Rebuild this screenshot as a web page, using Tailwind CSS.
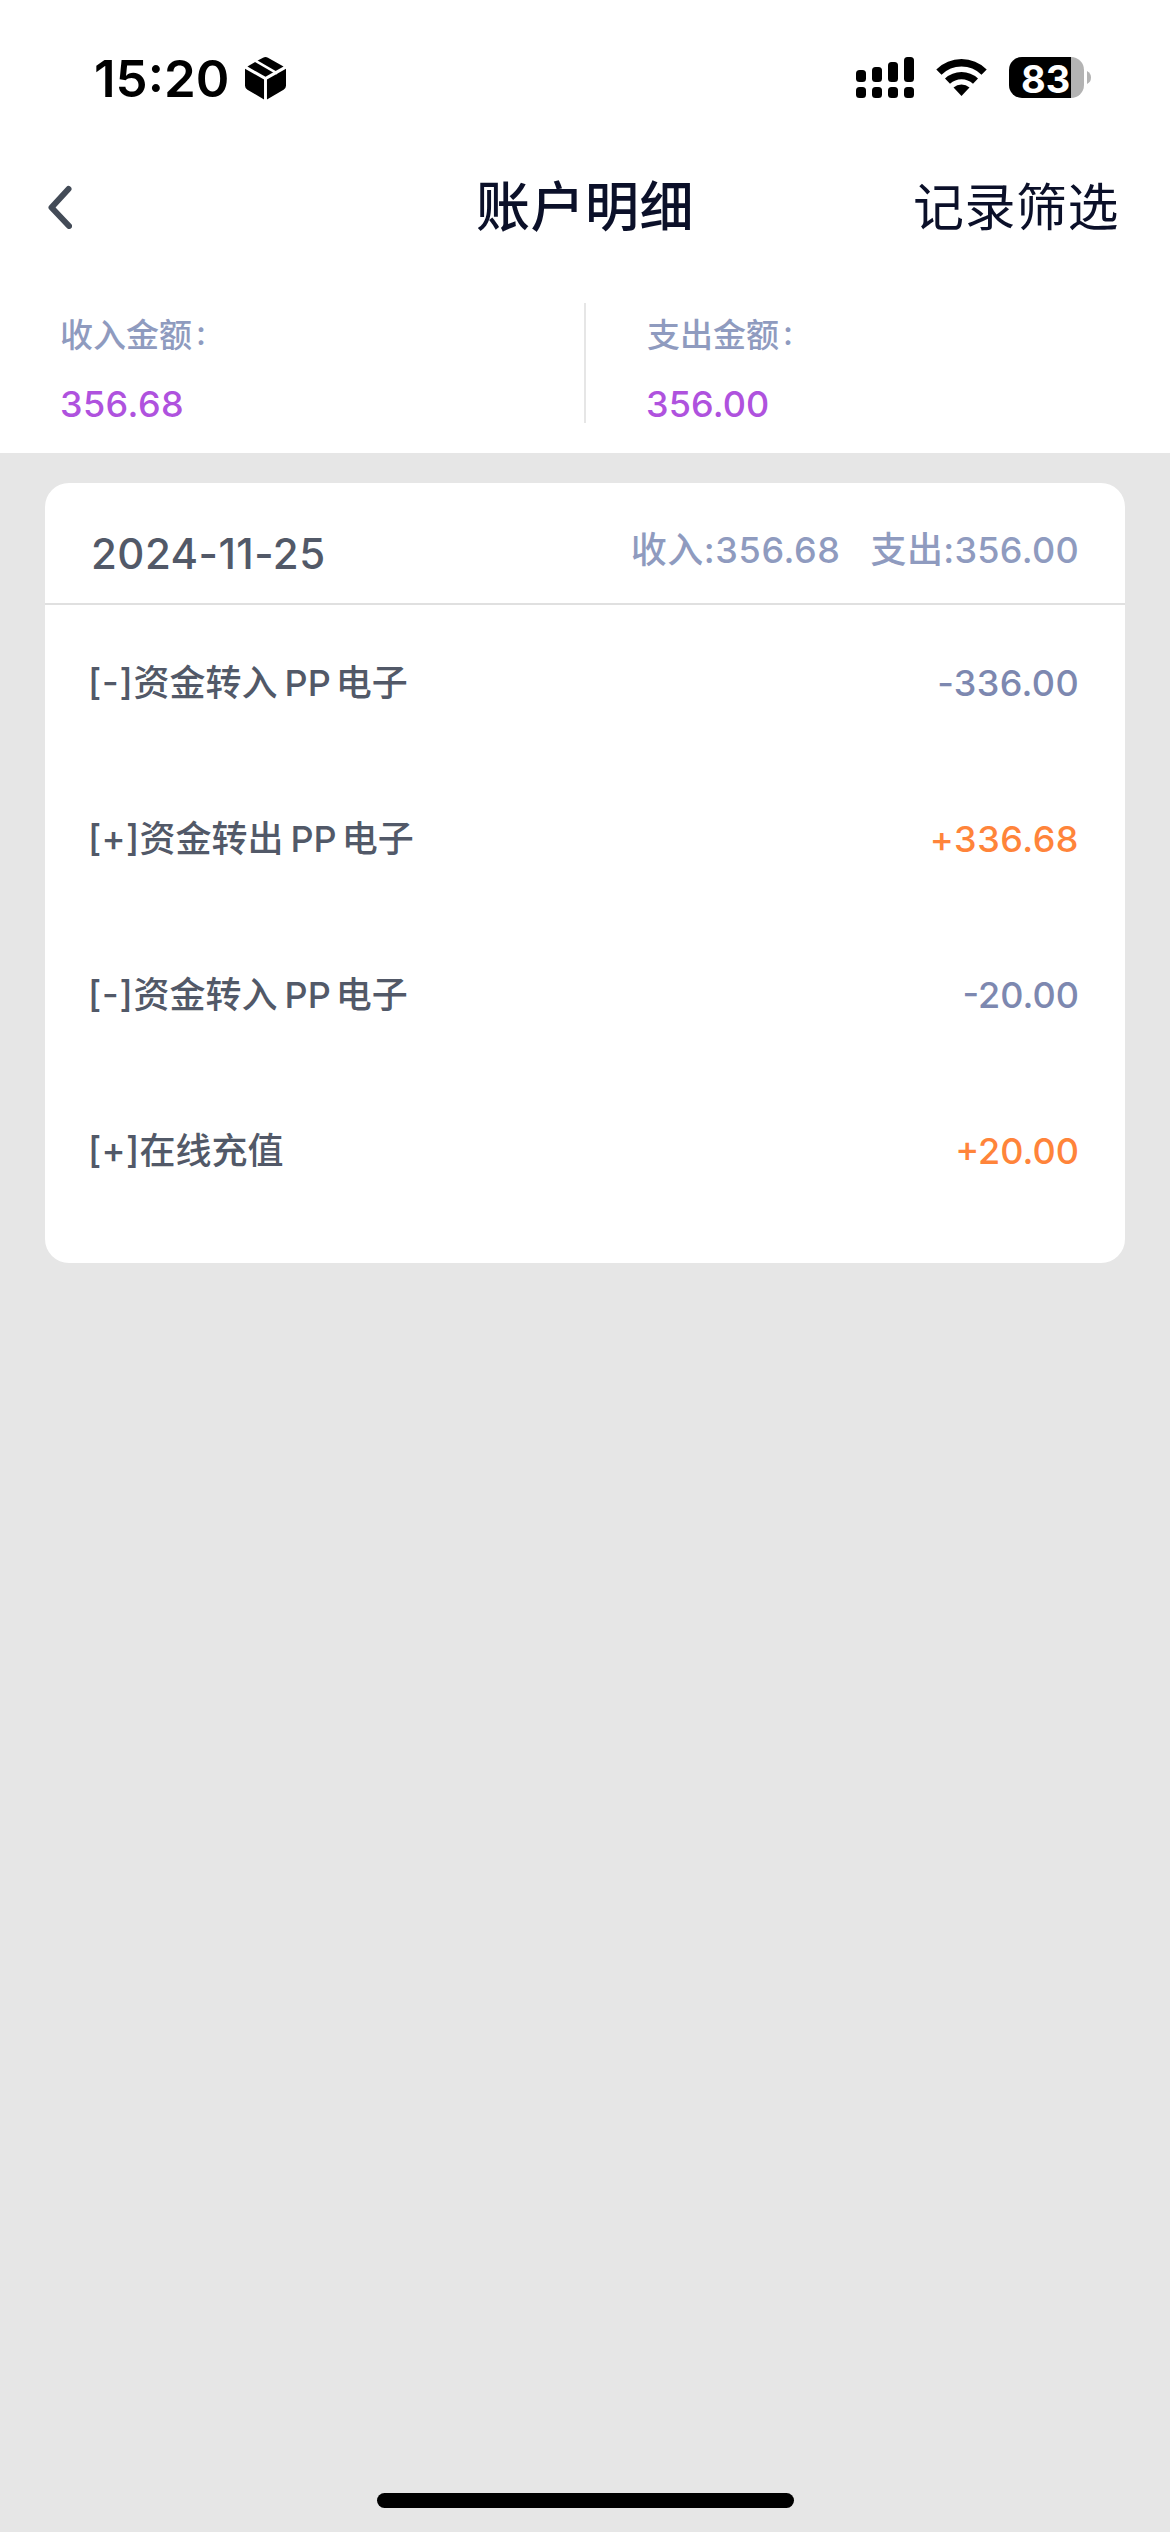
<!DOCTYPE html>
<html lang="zh-CN">
<head>
<meta charset="utf-8">
<title>账户明细</title>
<script src="https://cdn.jsdelivr.net/npm/@tailwindcss/browser@4"></script>
</head>
<body class="w-[1170px] h-[2532px] overflow-hidden bg-[#e6e6e6] font-['Inter','Noto_Sans_CJK_SC',sans-serif] whitespace-nowrap flex flex-col">
<header class="h-[453px] bg-white shrink-0">
  <div class="h-[141px] pt-[48px] pl-[94px] pr-[79px] flex justify-between items-start">
    <div class="flex items-center h-[60px] gap-[16px]">
      <span class="text-[51px] leading-[60px] pt-[2px] font-semibold text-black">15:20</span>
      <svg class="w-[41px] h-[44px]" viewBox="0 0 42 44"><path d="M15 3 18.500 1.200Q21 0 23.500 1.200L39.500 10.300 21 20.800 2.500 10.300Z"/><path d="M0 12.500 19.500 23.500V44L2.500 34Q0 32.500 0 30Z M42 12.500 22.500 23.500V44L39.500 34Q42 32.500 42 30Z"/><path d="M10 4 33 17.300" stroke="#fff" stroke-width="2.500"/></svg>
    </div>
    <div class="flex items-start pt-[9px]">
      <svg class="w-[58px] h-[42px] mr-[22px]" viewBox="0 0 58 42"><rect x="0" y="13" width="10" height="12" rx="3.500"/><rect x="16" y="10" width="10" height="15" rx="3.500"/><rect x="32" y="5" width="10" height="20" rx="3.500"/><rect x="48" y="0" width="10" height="25" rx="3.500"/><rect x="0" y="30" width="10" height="11" rx="3.500"/><rect x="16" y="30" width="10" height="11" rx="3.500"/><rect x="32" y="30" width="10" height="11" rx="3.500"/><rect x="48" y="30" width="10" height="11" rx="3.500"/></svg>
      <svg class="w-[51px] h-[42px] mr-[22px]" viewBox="0 0 51 42"><path d="M0.300 12.500Q11 2 25.500 2T50.700 12.500L45.500 17.700Q37 9.500 25.500 9.500T5.500 17.700Z"/><path d="M9 21.500Q16 15 25.500 15T42 21.500L37 26.800Q32 22.300 25.500 22.300T14 26.800Z"/><path d="M17.500 30.500Q21 27.500 25.500 27.500T33.500 30.500L25.500 39Z"/></svg>
      <div class="flex items-center">
        <div class="w-[75px] h-[41px] rounded-[13px] bg-[linear-gradient(to_right,#000_62px,#b3b3b3_62px)] pl-[12px] flex items-center"><span class="text-[38px] leading-[46px] pt-[2px] font-bold text-white">83</span></div>
        <svg class="w-[4px] h-[13px] ml-[3px]" viewBox="0 0 4 13"><path d="M0 0Q4 2 4 6.500T0 13Z" fill="#b3b3b3"/></svg>
      </div>
    </div>
  </div>
  <div class="h-[132px] pl-[48px] pr-[51px] grid grid-cols-[1fr_auto_1fr] items-center text-[#0b1029]">
    <svg class="w-[24px] h-[44px]" viewBox="0 0 24 44" fill="none" stroke="#434b57" stroke-width="6" stroke-linecap="round" stroke-linejoin="round"><path d="M20.500 4 3.500 22.500 21 41"/></svg>
    <h1 class="text-[54px] leading-[78px] font-medium tracking-[0.5px] pt-px ml-[3px]">账户明细</h1>
    <span class="text-[51px] leading-[78px] tracking-[0.5px] pt-px justify-self-end">记录筛选</span>
  </div>
  <div class="mt-[30px] h-[120px] grid grid-cols-[584px_2px_1fr]">
    <div class="pl-[60px]">
      <div class="text-[33px] leading-[48px] pt-[8px] font-medium text-[#8f9bbf]">收入金额<span class="inline-block ml-[4px] -translate-y-[2px]">:</span></div>
      <div class="text-[36px] leading-[38px] pt-[26px] font-medium text-[#af52de] tracking-[0.4px]">356.68</div>
    </div>
    <div class="bg-[#e6e6e6]"></div>
    <div class="pl-[60px]">
      <div class="text-[33px] leading-[48px] pt-[8px] font-medium text-[#8f9bbf] pl-px">支出金额<span class="inline-block ml-[4px] -translate-y-[2px]">:</span></div>
      <div class="text-[36px] leading-[38px] pt-[26px] font-medium text-[#af52de] tracking-[0.1px]">356.00</div>
    </div>
  </div>
</header>
<main class="mt-[30px] mx-[45px] h-[780px] shrink-0 rounded-[24px] bg-white text-[#525968] font-medium">
  <div class="h-[122px] pl-[46px] pr-[46px] border-b-2 border-[#e0e0e0] flex items-center justify-between">
    <span class="text-[42px] leading-[60px] mt-[22px] tracking-[0.45px]">2024-11-25</span>
    <div class="flex gap-[30px] text-[36px] leading-[54px] mt-[13px] text-[#8f9bbf] tracking-[0.6px]"><span>收入:356.68</span><span class="tracking-[0.3px]">支出:356.00</span></div>
  </div>
  <ul class="text-[36px] leading-[54px] pl-[43px] pr-[46px]">
    <li class="h-[156px] flex items-center justify-between"><span class="flex"><span class="tracking-[0.8px] -mt-px">[-]</span><span>资金转入</span><span class="ml-[7px]">PP</span><span class="ml-[5px]">电子</span></span><span class="tracking-[0.35px] text-[#7d88b0]">-336.00</span></li>
    <li class="h-[156px] flex items-center justify-between"><span class="flex"><span class="tracking-[0.3px] -mt-px">[+]</span><span>资金转出</span><span class="ml-[7px]">PP</span><span class="ml-[5px]">电子</span></span><span class="tracking-[0.5px] text-[#ff843a]">+336.68</span></li>
    <li class="h-[156px] flex items-center justify-between"><span class="flex"><span class="tracking-[0.8px] -mt-px">[-]</span><span>资金转入</span><span class="ml-[7px]">PP</span><span class="ml-[5px]">电子</span></span><span class="text-[#7d88b0]">-20.00</span></li>
    <li class="h-[156px] flex items-center justify-between"><span class="flex"><span class="tracking-[0.3px] -mt-px">[+]</span><span>在线充值</span></span><span class="text-[#ff843a]">+20.00</span></li>
  </ul>
</main>
<div class="mt-auto mb-[24px] mx-auto w-[417px] h-[15px] shrink-0 rounded-full bg-black"></div>
</body>
</html>
